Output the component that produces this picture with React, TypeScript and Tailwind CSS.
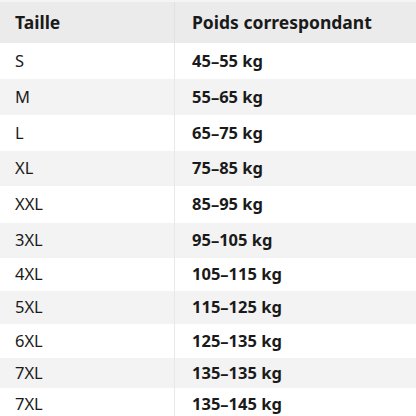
import React from "react";

const rows: [string, string, number][] = [
  ["S", "45–55 kg", 36],
  ["M", "55–65 kg", 36],
  ["L", "65–75 kg", 36],
  ["XL", "75–85 kg", 35],
  ["XXL", "85–95 kg", 37],
  ["3XL", "95–105 kg", 35],
  ["4XL", "105–115 kg", 33],
  ["5XL", "115–125 kg", 33],
  ["6XL", "125–135 kg", 34],
  ["7XL", "135–135 kg", 30],
  ["7XL", "135–145 kg", 32],
];

export default function App() {
  return (
    <div
      className="w-[416px] h-[416px] overflow-hidden bg-white text-[#1a1a1a]"
      style={{ fontFamily: '"Noto Sans", "Open Sans", sans-serif' }}
    >
      <div className="border-t-2 border-[#f4f4f4]">
        <div className="flex h-[41px] bg-[#ebebeb] font-bold text-[17.5px]">
          <div className="w-[175px] flex items-center pl-[15px] border-r border-[#e2e2e2]">Taille</div>
          <div className="flex-1 flex items-center pl-[17px]">Poids correspondant</div>
        </div>
        {rows.map(([s, w, h], i) => (
          <div
            key={i}
            className={`flex text-[16.5px] ${i % 2 === 1 ? "bg-[#f3f3f3]" : "bg-white"}`}
            style={{ height: h }}
          >
            <div className="w-[175px] flex items-center pl-[15px] border-r border-[#e8e8e8]">{s}</div>
            <div className="flex-1 flex items-center pl-[17px] font-bold">{w}</div>
          </div>
        ))}
      </div>
    </div>
  );
}
